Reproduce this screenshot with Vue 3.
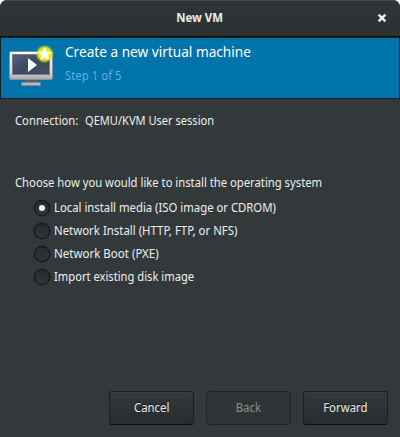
<script setup>
import { ref } from 'vue'
const methods = [
  { label: 'Local install media (ISO image or CDROM)', fit: 0.943 },
  { label: 'Network Install (HTTP, FTP, or NFS)', fit: 0.951 },
  { label: 'Network Boot (PXE)', fit: 0.96 },
  { label: 'Import existing disk image', fit: 0.932 },
]
const selected = ref(0)
</script>

<template>
  <div class="window">
    <header class="titlebar">
      <span class="title">New VM</span>
      <svg class="close" width="10" height="10" viewBox="0 0 10 10"><path d="M1.6 1.6L8.4 8.4M8.4 1.6L1.6 8.4" /></svg>
    </header>
    <section class="banner">
      <svg class="logo" width="48" height="48" viewBox="0 0 48 48">
        <defs>
          <linearGradient id="bezel" x1="0" y1="0" x2="0" y2="1">
            <stop offset="0" stop-color="#fff" /><stop offset=".75" stop-color="#d8d8d8" /><stop offset="1" stop-color="#a5a5a5" />
          </linearGradient>
          <linearGradient id="screen" x1="0" y1="0" x2="1" y2="1">
            <stop offset="0" stop-color="#57647b" /><stop offset=".5" stop-color="#3d485d" /><stop offset="1" stop-color="#455168" />
          </linearGradient>
          <radialGradient id="glow">
            <stop offset="0" stop-color="#fbf620" /><stop offset=".65" stop-color="#e4e91c" /><stop offset="1" stop-color="#b5d321" stop-opacity="0" />
          </radialGradient>
        </defs>
        <path d="M18 36H29V40H18Z" fill="#56616a" />
        <rect x="13.5" y="39.5" width="19" height="3" rx="1" fill="#b8b8b8" stroke="#85898c" />
        <rect x="1.5" y="8.5" width="43" height="28" rx="1.5" fill="url(#bezel)" stroke="#8c9195" />
        <rect x="4.5" y="11.5" width="37" height="20" fill="url(#screen)" stroke="#747b86" />
        <path d="M20 15L29 22L20 29Z" fill="#fff" />
        <circle cx="36.7" cy="11" r="9.5" fill="url(#glow)" />
        <path d="M36.7 5L38.4 9L42.7 9.4L39.5 12.2L40.5 16.4L36.7 14.2L32.9 16.4L33.9 12.2L30.7 9.4L35 9Z" fill="#fff" stroke="#fff" stroke-width=".7" stroke-linejoin="round" />
      </svg>
      <div class="heading">
        <h1>Create a new virtual machine</h1>
        <p>Step 1 of 5</p>
      </div>
    </section>
    <main class="content">
      <div class="connection"><span class="label">Connection:</span><span class="value">QEMU/KVM User session</span></div>
      <div class="prompt"><span class="text">Choose how you would like to install the operating system</span></div>
      <div class="options">
        <div v-for="(m, i) in methods" :key="m.label" class="option" @click="selected = i">
          <i class="radio" :class="{ on: selected === i }"></i><span class="text" :style="{ transform: `scaleX(${m.fit})` }">{{ m.label }}</span>
        </div>
      </div>
    </main>
    <footer class="actions">
      <button><span>Cancel</span></button>
      <button class="off" disabled><span>Back</span></button>
      <button><span>Forward</span></button>
    </footer>
  </div>
</template>

<style>
body { background: #fff; overflow: hidden; }
</style>
<style scoped>
* { box-sizing: border-box; }
.window { width: 400px; height: 437px; display: flex; flex-direction: column; background: #33393b; border-radius: 7px 7px 0 0; overflow: hidden; font: 12px/18px "Noto Sans", sans-serif; color: #eeeeec; }
.titlebar { height: 37px; flex: none; display: grid; grid-template-columns: 1fr auto 1fr; align-items: center; background: linear-gradient(#2f3537, #2b3133); border-top: 1px solid #454b4d; border-bottom: 1px solid #0e1011; padding-right: 13px; }
.title { grid-column: 2; font-weight: 700; font-size: 12px; margin: 0 0 1px 12px; transform: scaleX(.95); }
.close { justify-self: end; margin-bottom: 1px; stroke: #eeeeec; stroke-width: 2.4; }
.banner { height: 62px; flex: none; display: flex; background: #0073aa; border: 1px solid #1c1f20; padding: 5px 0 0 7px; }
.heading { padding-left: 9px; margin-top: -1px; }
h1 { margin: 0; font-size: 14px; line-height: 20px; font-weight: 400; color: #fff; white-space: nowrap; transform: scaleX(.974); transform-origin: left; }
p { margin: 5px 0 0; color: #5eb0df; transform: scaleX(.95); transform-origin: left; }
.content { padding: 13px 15px 0; flex: 1; white-space: nowrap; }
.text, .label, .value { display: inline-block; transform: scaleX(.938); transform-origin: left; }
.connection { display: flex; }
.label { width: 70px; }
.value { transform: scaleX(.922); }
.prompt { margin-top: 44px; }
.options { margin: 4px 0 0 19px; }
.option { height: 23px; display: flex; align-items: center; gap: 4px; }
.radio { width: 16px; height: 16px; margin-top: 1px; border-radius: 50%; border: 1px solid #121516; box-shadow: 0 0 0 .5px #1b1f20; background: linear-gradient(#262b2d, #303638); display: grid; place-items: center; }
.radio.on::after { content: ""; width: 6px; height: 6px; border-radius: 50%; background: #f6f6f4; }
.actions { display: flex; justify-content: flex-end; gap: 12px; padding: 0 12px 12px; }
button { width: 85px; height: 34px; padding: 0; border: 1px solid #1c1f20; border-bottom-color: #0d0f10; border-radius: 3px; background: linear-gradient(#33393b, #272c2e); box-shadow: inset 0 1px #3a4042; font: inherit; color: #eeeeec; text-shadow: 0 -1px #111; }
button span { display: inline-block; transform: scaleX(.95); }
.off { background: #2f3537; border-color: #1f2325; box-shadow: none; color: #8b8e8f; text-shadow: none; }
</style>
